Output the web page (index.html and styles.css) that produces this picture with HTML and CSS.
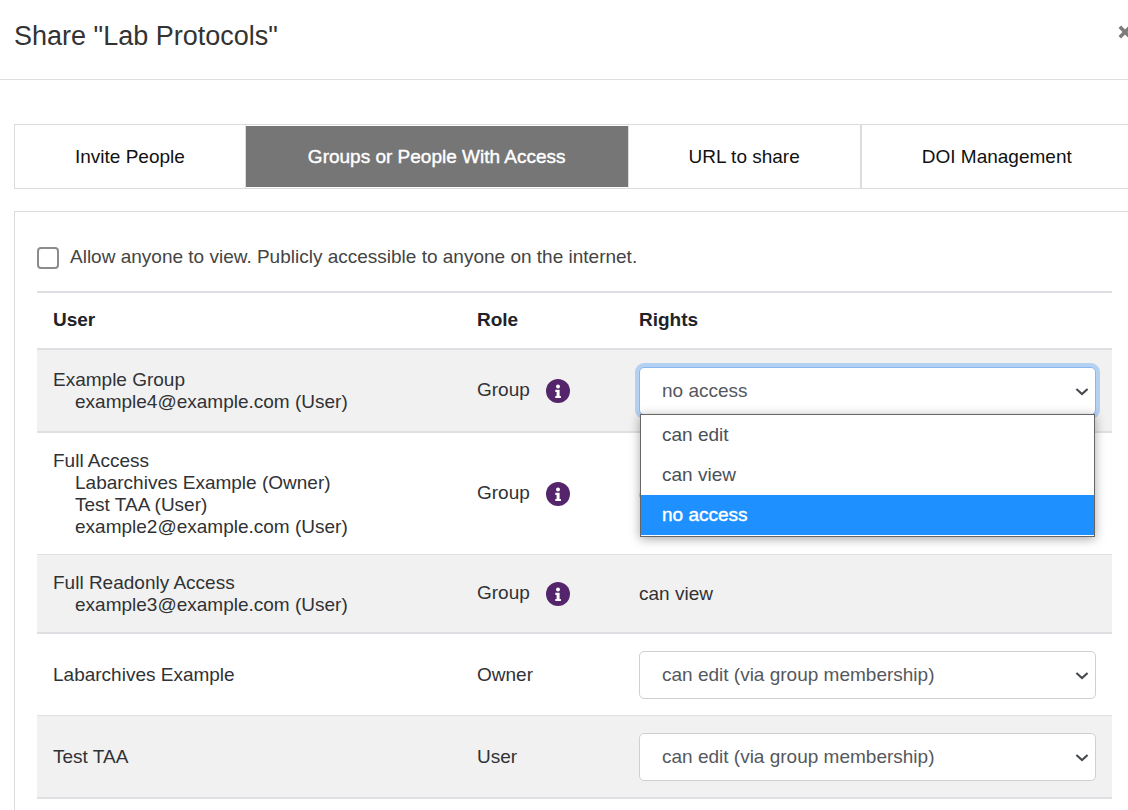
FILE: index.html
```html
<!DOCTYPE html>
<html lang="en">
<head>
<meta charset="utf-8">
<title>Share "Lab Protocols"</title>
<meta name="viewport" content="width=device-width, initial-scale=1">
<link rel="stylesheet" href="styles.css">
</head>
<body>
<svg class="sprite" aria-hidden="true">
  <symbol id="chevron" viewBox="0 0 14 10"><path d="M1.4 2 L7 7 L12.6 2" fill="none" stroke="#45494e" stroke-width="2.1"/></symbol>
  <symbol id="info" viewBox="0 0 24 24">
    <circle cx="12" cy="12" r="12" fill="#55256b"/>
    <circle cx="12" cy="7.6" r="2" fill="#fff"/>
    <path d="M9.3 10.8h4.3v6.1h1.3v2.1H9.3v-2.1h1.3v-4h-1.3z" fill="#fff"/>
  </symbol>
  <symbol id="close" viewBox="0 0 14 14"><path d="M1.8 1.8 L12.2 12.2 M12.2 1.8 L1.8 12.2" fill="none" stroke="#7b7b7b" stroke-width="3.6"/></symbol>
</svg>

<main class="dialog">
  <header class="dialog-header">
    <h1 class="dialog-title">Share "Lab Protocols"</h1>
    <button class="close" type="button" aria-label="Close"><svg class="close-icon"><use href="#close"/></svg></button>
  </header>

  <nav class="tabs" aria-label="Share options">
    <button class="tab" type="button">Invite People</button>
    <button class="tab tab-active" type="button" aria-current="true">Groups or People With Access</button>
    <button class="tab tab-divided" type="button">URL to share</button>
    <button class="tab tab-last" type="button">DOI Management</button>
  </nav>

  <section class="panel">
    <div class="public">
      <input class="public-box" type="checkbox" id="public">
      <label for="public">Allow anyone to view. Publicly accessible to anyone on the internet.</label>
    </div>

    <table class="rights">
      <colgroup><col class="col-user"><col class="col-role"><col></colgroup>
      <thead>
        <tr><th scope="col">User</th><th scope="col">Role</th><th scope="col">Rights</th></tr>
      </thead>
      <tbody>
        <tr class="shaded heavy">
          <td>Example Group<div class="member">example4@example.com (User)</div></td>
          <td><span class="role">Group <svg class="info"><use href="#info"/></svg></span></td>
          <td>
            <div class="picker">
              <select class="select select-open" aria-label="Rights for Example Group"><option>can edit</option><option>can view</option><option selected>no access</option></select>
              <svg class="chevron"><use href="#chevron"/></svg>
              <div class="menu" role="listbox" aria-label="Rights">
                <div class="option" role="option">can edit</div>
                <div class="option" role="option">can view</div>
                <div class="option option-active" role="option" aria-selected="true">no access</div>
              </div>
            </div>
          </td>
        </tr>
        <tr>
          <td>Full Access<div class="member">Labarchives Example (Owner)</div><div class="member">Test TAA (User)</div><div class="member">example2@example.com (User)</div></td>
          <td><span class="role">Group <svg class="info"><use href="#info"/></svg></span></td>
          <td>can edit</td>
        </tr>
        <tr class="shaded heavy">
          <td>Full Readonly Access<div class="member">example3@example.com (User)</div></td>
          <td><span class="role">Group <svg class="info"><use href="#info"/></svg></span></td>
          <td>can view</td>
        </tr>
        <tr>
          <td>Labarchives Example</td>
          <td>Owner</td>
          <td>
            <div class="picker">
              <select class="select" aria-label="Rights for Labarchives Example"><option>can edit (via group membership)</option></select>
              <svg class="chevron"><use href="#chevron"/></svg>
            </div>
          </td>
        </tr>
        <tr class="shaded heavy">
          <td>Test TAA</td>
          <td>User</td>
          <td>
            <div class="picker">
              <select class="select" aria-label="Rights for Test TAA"><option>can edit (via group membership)</option></select>
              <svg class="chevron"><use href="#chevron"/></svg>
            </div>
          </td>
        </tr>
      </tbody>
    </table>
  </section>
</main>
</body>
</html>
```
FILE: styles.css
```css
* { box-sizing: border-box; }

body {
  margin: 0;
  background: #fff;
  color: #303235;
  font: 19px/22px "Liberation Sans", Arial, sans-serif;
}

.sprite { position: absolute; width: 0; height: 0; }

.dialog {
  display: flex;
  flex-direction: column;
  min-height: 100vh;
  overflow: hidden;
}

.dialog-header {
  display: flex;
  justify-content: space-between;
  align-items: flex-start;
  padding: 20px 0 27px 14px;
  border-bottom: 1px solid #dedede;
}

.dialog-title {
  margin: 0;
  font-size: 27px;
  font-weight: 400;
  line-height: 32px;
  color: #333;
}

.close {
  margin: 5px -4px 0 0;
  padding: 0;
  border: 0;
  background: none;
  line-height: 0;
}

.close-icon { width: 14px; height: 14px; }

.tabs {
  display: flex;
  margin: 44px 0 22px 14px;
  border: 1px solid #dcdcdc;
  border-right: 0;
}

.tab {
  flex: none;
  height: 63px;
  padding: 0 60px;
  border: 0;
  border-right: 1px solid #dcdcdc;
  background: #fff;
  color: #111;
  font: inherit;
}

.tab-active {
  padding: 0 62px;
  border-top: 1px solid #fff;
  border-bottom: 1px solid #fff;
  background: #767676;
  color: #fff;
  -webkit-text-stroke: 0.4px #fff;
}

.tab-divided { border-right-width: 2px; }
.tab-last { border-right: 0; }

.panel {
  flex: 1;
  margin-left: 14px;
  padding: 34px 16px 11px 22px;
  border: solid #dcdcdc;
  border-width: 1px 0 0 1px;
}

.public {
  display: flex;
  align-items: flex-start;
  gap: 11px;
  margin-bottom: 22px;
  color: #444;
}

.public-box {
  appearance: none;
  width: 22px;
  height: 22px;
  margin: 1px 0 0;
  border: 2px solid #8c8c8c;
  border-radius: 4px;
  background: #fff;
}

.rights {
  width: 100%;
  border-spacing: 0;
  border-top: 2px solid #dee0e3;
  table-layout: fixed;
}

.col-user { width: 424px; }
.col-role { width: 162px; }

.rights th {
  padding: 16px 16px 17px;
  border-bottom: 2px solid #dee0e3;
  color: #212328;
  text-align: left;
}

.rights td {
  padding: 17px 16px 16px;
  border-bottom: 1px solid #dee0e3;
  vertical-align: middle;
}

.shaded td { background: #f1f1f1; }
.rights .heavy td { border-bottom-width: 2px; }

.member { padding-left: 22px; }

.role { display: flex; align-items: flex-start; gap: 16px; }
.info { width: 24px; height: 24px; }

.picker { position: relative; }

.select {
  appearance: none;
  display: block;
  width: 100%;
  height: 48px;
  padding: 0 40px 0 22px;
  border: 1px solid #cdd0d4;
  border-radius: 5px;
  outline: 0;
  background: #fff;
  color: #55585d;
  font: inherit;
}

.select-open {
  border-color: #86b9f4;
  box-shadow: 0 0 0 4px #b5d1f2;
}

.chevron {
  position: absolute;
  top: 20px;
  right: 7px;
  width: 14px;
  height: 10px;
  pointer-events: none;
}

.menu {
  position: absolute;
  z-index: 1;
  top: 47px;
  left: 1px;
  right: 1px;
  padding-bottom: 1px;
  border: 1px solid #666;
  background: #fff;
  box-shadow: 0 2px 10px rgba(0, 0, 0, 0.35);
}

.option {
  padding: 9px 21px;
  color: #4b5057;
}

.option-active {
  background: #1e90ff;
  color: #fff;
  -webkit-text-stroke: 0.4px #fff;
}
```
